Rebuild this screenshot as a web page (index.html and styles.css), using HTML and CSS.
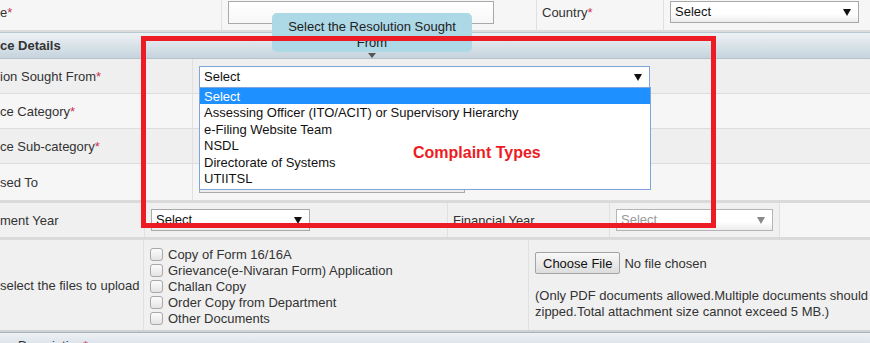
FILE: index.html
```html
<!DOCTYPE html>
<html lang="en">
<head>
    <meta charset="UTF-8">
    <title>Grievance Details</title>
    <link rel="stylesheet" href="styles.css">
</head>
<body>

<div class="form">

    <!-- Address row (tail) -->
    <div class="row top-row">
        <div class="cell label">e<span class="req">*</span></div>
        <div class="cell"><input class="text-input" type="text"></div>
        <div class="cell label">Country<span class="req">*</span></div>
        <div class="cell"><div class="select country-select">Select</div></div>
    </div>

    <div class="section-head">ce Details</div>

    <!-- Grievance rows -->
    <div class="row grv-row shade">
        <div class="cell label">ion Sought From<span class="req">*</span></div>
        <div class="cell">
            <div class="select res-select focused">Select
                <ul class="option-list">
                    <li class="active">Select</li>
                    <li>Assessing Officer (ITO/ACIT) or Supervisory Hierarchy</li>
                    <li>e-Filing Website Team</li>
                    <li>NSDL</li>
                    <li>Directorate of Systems</li>
                    <li>UTIITSL</li>
                </ul>
            </div>
        </div>
    </div>
    <div class="row grv-row">
        <div class="cell label">ce Category<span class="req">*</span></div>
        <div class="cell"></div>
    </div>
    <div class="row grv-row shade">
        <div class="cell label">ce Sub-category<span class="req">*</span></div>
        <div class="cell"></div>
    </div>
    <div class="row grv-row last">
        <div class="cell label">sed To</div>
        <div class="cell"><div class="select addressed-select"></div></div>
    </div>

    <!-- Year row -->
    <div class="row year-row">
        <div class="cell label">ment Year</div>
        <div class="cell"><div class="select year-select">Select</div></div>
        <div class="cell label">Financial Year</div>
        <div class="cell"><div class="select year-select disabled">Select</div></div>
        <div class="cell blank"></div>
    </div>

    <!-- Upload row -->
    <div class="row files-row">
        <div class="cell label">select the files to upload</div>
        <div class="cell">
            <ul class="check-list">
                <li><input type="checkbox"> Copy of Form 16/16A</li>
                <li><input type="checkbox"> Grievance(e-Nivaran Form) Application</li>
                <li><input type="checkbox"> Challan Copy</li>
                <li><input type="checkbox"> Order Copy from Department</li>
                <li><input type="checkbox"> Other Documents</li>
            </ul>
        </div>
        <div class="cell upload">
            <div class="file-line"><button class="file-btn">Choose File</button> No file chosen</div>
            <p class="note">(Only PDF documents allowed.Multiple documents should be zipped.Total attachment size cannot exceed 5 MB.)</p>
        </div>
    </div>

    <div class="section-head desc-head">Description<span class="req">*</span></div>

    <!-- Annotations -->
    <div class="tooltip">Select the Resolution Sought From</div>
    <div class="tooltip-arrow"></div>
    <div class="mark-box"></div>
    <div class="mark-label">Complaint Types</div>

</div>

</body>
</html>
```

FILE: styles.css
```css
body {
    margin: 0;
    font-family: "Liberation Sans", Arial, sans-serif;
    font-size: 13px;
    color: #333;
    background-color: #f5f5f5;
    overflow: hidden;
}

.form {
    display: flow-root;
    position: relative;
    width: 920px;
}

.row {
    display: grid;
    background-color: #f6f6f6;
    border-bottom: 1px solid #dcdcdc;
}

.row.shade {
    background-color: #efefef;
}

.cell {
    display: flex;
    align-items: center;
    padding: 0 6px;
    border-right: 1px solid #e0e0e0;
}

.cell.label {
    padding: 0;
}

.req {
    color: #cc3355;
}

/* top row */
.top-row {
    grid-template-columns: 222px 315px 127px 1fr;
    height: 36px;
    margin-top: -6px;
    border-bottom: 2px solid #dcdcdc;
}

.top-row .cell.label:nth-child(3) {
    padding-left: 5px;
}

.text-input {
    width: 266px;
    height: 23px;
    box-sizing: border-box;
    border: 1px solid #a9a9a9;
    background: linear-gradient(#fff, #f7f7f7);
    margin: 0;
}

/* select boxes */
.select {
    position: relative;
    box-sizing: border-box;
    height: 22px;
    line-height: 20px;
    padding-left: 4px;
    border: 1px solid #a9a9a9;
    background: linear-gradient(#fff 60%, #ececec);
    color: #111;
}

.select::after {
    content: "";
    position: absolute;
    right: 7px;
    top: 7px;
    border-left: 4px solid transparent;
    border-right: 4px solid transparent;
    border-top: 7px solid #111;
}

.select.focused {
    border-color: #7fa6dc;
    background: #fff;
}

.select.disabled {
    color: #999;
    border-color: #b5b5b5;
}

.select.disabled::after {
    border-top-color: #888;
}

.country-select {
    width: 189px;
}

.res-select {
    width: 451px;
    margin-top: 2px;
}

.addressed-select {
    width: 266px;
}

.year-select {
    width: 159px;
}

/* section header */
.section-head {
    height: 25px;
    line-height: 25px;
    font-weight: bold;
    color: #333;
    border-top: 1px solid #b9c7d2;
    border-bottom: 1px solid #b3c2cd;
    background: linear-gradient(#edf1f4, #c6d4de);
}

.desc-head {
    padding-left: 18px;
    font-weight: normal;
    border-top-color: #a7b4be;
}

/* grievance rows */
.grv-row {
    grid-template-columns: 193px 1fr;
    height: 34px;
}

.grv-row.last {
    height: 36px;
    border-bottom: 3px solid #dadada;
}

.option-list {
    position: absolute;
    z-index: 2;
    left: -1px;
    top: 20px;
    width: 452px;
    box-sizing: border-box;
    margin: 0;
    padding: 0 0 3px;
    list-style: none;
    background: #fff;
    border: 1px solid #7fa6dc;
}

.option-list li {
    height: 16.4px;
    line-height: 17px;
    padding-left: 4px;
    color: #111;
}

.option-list li.active {
    background-color: #1e90ff;
    color: #fff;
}

/* year row */
.year-row {
    grid-template-columns: 145px 303px 162px 170px 1fr;
    height: 34px;
    background-color: #f0f0f0;
    border-bottom: 3px solid #dadada;
}

.year-row .cell.label:nth-child(3) {
    padding-left: 5px;
}

.year-row .cell.blank {
    background-color: #f6f6f6;
    border-right: none;
}

/* upload row */
.files-row {
    grid-template-columns: 144px 385px 1fr;
    height: 90px;
    background-color: #f0f0f0;
    border-bottom: 2px solid #d2d2d2;
}

.check-list {
    margin: 2px 0 0;
    padding: 0;
    list-style: none;
}

.check-list li {
    display: flex;
    align-items: center;
    height: 16px;
}

.check-list input {
    appearance: none;
    width: 13px;
    height: 13px;
    margin: 0 5px 0 0;
    border: 1px solid #a8a8a8;
    border-radius: 3px;
    background: linear-gradient(#fcfcfc, #e4e4e4);
}

.cell.upload {
    flex-direction: column;
    align-items: flex-start;
    justify-content: flex-start;
    padding-top: 12px;
}

.file-line {
    display: flex;
    align-items: center;
    gap: 4px;
}

.file-btn {
    height: 22px;
    padding: 0 7px;
    font-family: inherit;
    font-size: 13px;
    color: #111;
    border: 1px solid #a3a3a3;
    border-radius: 2px;
    background: linear-gradient(#f8f8f8, #dddddd);
}

.note {
    margin: 14px 0 0;
    line-height: 16px;
}

/* annotations */
.tooltip {
    position: absolute;
    z-index: 3;
    left: 272px;
    top: 13px;
    width: 200px;
    height: 39px;
    box-sizing: border-box;
    padding: 6px 16px 0;
    line-height: 16px;
    text-align: center;
    color: #222;
    background-color: #add8e6;
    border-radius: 5px;
    overflow: hidden;
}

.tooltip-arrow {
    position: absolute;
    z-index: 3;
    left: 368px;
    top: 53px;
    border-left: 4px solid transparent;
    border-right: 4px solid transparent;
    border-top: 5px solid #555;
}

.mark-box {
    position: absolute;
    z-index: 4;
    left: 141px;
    top: 36px;
    width: 575px;
    height: 192px;
    box-sizing: border-box;
    border: 5px solid #ed1c24;
}

.mark-label {
    position: absolute;
    z-index: 4;
    left: 413px;
    top: 144px;
    font-size: 16px;
    font-weight: bold;
    color: #ed1c24;
}
```
